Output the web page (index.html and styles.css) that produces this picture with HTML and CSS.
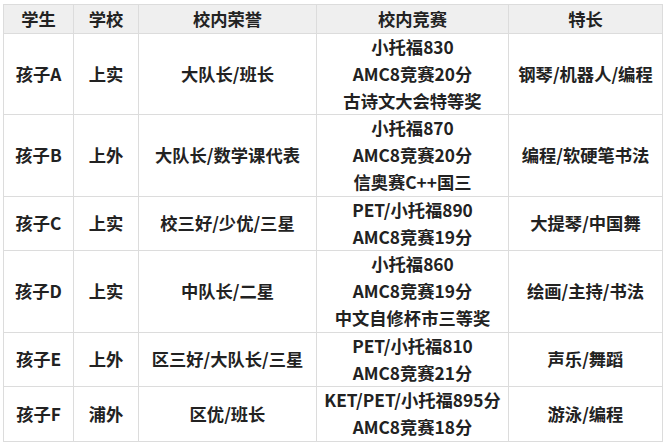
FILE: index.html
```html
<!DOCTYPE html>
<html lang="zh">
<head>
<meta charset="utf-8">
<link rel="stylesheet" href="styles.css">
</head>
<body>
<table class="grid">
  <colgroup>
    <col class="c1"><col class="c2"><col class="c3"><col class="c4"><col class="c5">
  </colgroup>
  <thead>
    <tr><th>学生</th><th>学校</th><th>校内荣誉</th><th>校内竞赛</th><th>特长</th></tr>
  </thead>
  <tbody>
    <tr><td>孩子A</td><td>上实</td><td>大队长/班长</td><td>小托福830<br>AMC8竞赛20分<br>古诗文大会特等奖</td><td>钢琴/机器人/编程</td></tr>
    <tr><td>孩子B</td><td>上外</td><td>大队长/数学课代表</td><td>小托福870<br>AMC8竞赛20分<br>信奥赛C++国三</td><td>编程/软硬笔书法</td></tr>
    <tr><td>孩子C</td><td>上实</td><td>校三好/少优/三星</td><td>PET/小托福890<br>AMC8竞赛19分</td><td>大提琴/中国舞</td></tr>
    <tr><td>孩子D</td><td>上实</td><td>中队长/二星</td><td>小托福860<br>AMC8竞赛19分<br>中文自修杯市三等奖</td><td>绘画/主持/书法</td></tr>
    <tr><td>孩子E</td><td>上外</td><td>区三好/大队长/三星</td><td>PET/小托福810<br>AMC8竞赛21分</td><td>声乐/舞蹈</td></tr>
    <tr><td>孩子F</td><td>浦外</td><td>区优/班长</td><td>KET/PET/小托福895分<br>AMC8竞赛18分</td><td>游泳/编程</td></tr>
  </tbody>
</table>
</body>
</html>
```
FILE: styles.css
```css
html, body {
  margin: 0;
  background: #ffffff;
}
body {
  padding: 4px 3px 0 3px;
  font-family: "Noto Sans CJK SC", "Noto Sans", sans-serif;
  color: #222222;
}
.grid {
  border-collapse: collapse;
  table-layout: fixed;
  width: 659px;
}
.c1 { width: 70px; }
.c2 { width: 65px; }
.c3 { width: 178px; }
.c4 { width: 192px; }
.c5 { width: 154px; }
.grid th, .grid td {
  border: 1px solid #dcdcdc;
  padding: 0;
  text-align: center;
  vertical-align: middle;
  font-size: 17.3px;
  font-weight: 700;
  line-height: 26.8px;
  white-space: nowrap;
}
.grid th {
  background: #efefef;
  line-height: 28px;
}
```
